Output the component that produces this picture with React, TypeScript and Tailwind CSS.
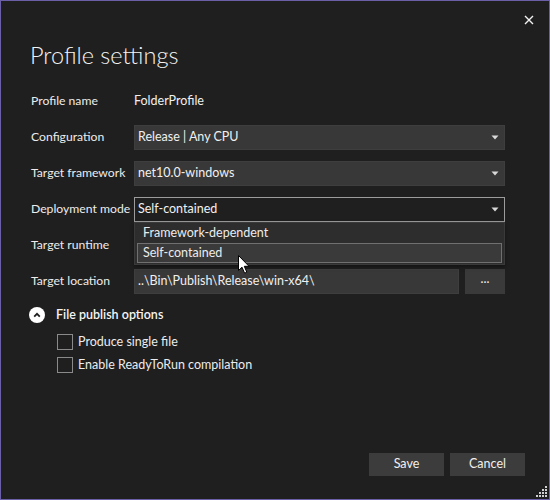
import { ReactNode } from "react";

const font = { fontFamily: "Lato, 'Noto Sans', sans-serif" };

function Caret() {
  return (
    <svg width="8" height="5" viewBox="0 0 8 5" className="shrink-0">
      <path d="M0.5 0.5 H7.5 L4 4.5 Z" fill="#d8d8d8" />
    </svg>
  );
}

function Combo({ value, focused }: { value: string; focused?: boolean }) {
  return (
    <div
      className={`flex h-[25px] w-full items-center justify-between pl-[3px] pr-[5px] text-[12.5px] text-[#f0f0f0] ${
        focused ? "border border-[#9c9c9c] bg-[#1f1f1f]" : "border border-[#3e3e3e] bg-[#383838]"
      }`}
    >
      <span>{value}</span>
      <Caret />
    </div>
  );
}

function Row({ label, children }: { label: string; children: ReactNode }) {
  return (
    <div className="flex h-[25px] items-center">
      <div className="w-[103px] shrink-0 text-[12.2px] text-[#ececec]">{label}</div>
      <div className="relative flex flex-1 items-center">{children}</div>
    </div>
  );
}

function Checkbox({ label }: { label: string }) {
  return (
    <div className="flex items-center gap-[5px]">
      <div className="h-[16px] w-[16px] border border-[#8a8a8a] bg-[#1f1f1f]" />
      <span className="text-[12.5px] leading-[16px] text-[#ececec]">{label}</span>
    </div>
  );
}

function Cursor() {
  return (
    <svg width="13" height="20" viewBox="0 0 13 20" className="pointer-events-none absolute left-[103px] top-[32px]">
      <path
        d="M0.5 0.5 L0.5 15.5 L4 12.2 L6.6 18.2 L8.8 17.2 L6.3 11.3 L11 11.3 Z"
        fill="#ffffff"
        stroke="#000000"
        strokeWidth="1"
        strokeLinejoin="round"
      />
    </svg>
  );
}

export default function App() {
  return (
    <div
      className="relative flex h-[500px] w-[550px] flex-col border border-[#6b60a8] bg-[#1f1f1f] text-[#f0f0f0]"
      style={font}
    >
      {/* Close */}
      <div className="flex h-[38px] justify-end pr-[15px] pt-[14px]">
        <svg width="10" height="10" viewBox="0 0 10 10">
          <path d="M1 1 L9 9 M9 1 L1 9" stroke="#f2f2f2" strokeWidth="1.4" />
        </svg>
      </div>

      <div className="flex flex-1 flex-col px-[30px]">
        <h1 className="-ml-[1px] text-[23.5px] font-light leading-[32px] text-[#f4f4f4]">Profile settings</h1>

        <div className="mt-[18px] flex w-[474px] flex-col gap-[11px]">
          <Row label="Profile name">
            <span className="text-[12.5px] text-[#f0f0f0]">FolderProfile</span>
          </Row>
          <Row label="Configuration">
            <Combo value="Release | Any CPU" />
          </Row>
          <Row label="Target framework">
            <Combo value="net10.0-windows" />
          </Row>
          <Row label="Deployment mode">
            <Combo value="Self-contained" focused />
            <div className="absolute left-0 right-0 top-full z-10 flex flex-col border border-[#3a3a3a] bg-[#2d2d2d] px-[2px] pb-[1px] shadow-[0_2px_4px_rgba(0,0,0,0.4)]">
              <div className="flex h-[20px] items-center pl-[6px] text-[12.5px] text-[#ececec]">
                Framework-dependent
              </div>
              <div className="flex h-[20px] items-center border border-[#707070] bg-[#3a3a3a] pl-[5px] text-[12.5px] text-[#ececec]">
                Self-contained
              </div>
              <Cursor />
            </div>
          </Row>
          <Row label="Target runtime">
            <Combo value="" />
          </Row>
          <Row label="Target location">
            <div className="flex w-full gap-[6px]">
              <div className="flex h-[25px] flex-1 items-center border border-[#3e3e3e] bg-[#383838] pl-[3px] text-[12.5px] text-[#f0f0f0]">
                ..\Bin\Publish\Release\win-x64\
              </div>
              <div className="flex h-[25px] w-[40px] items-center justify-center bg-[#3a3a3a] pb-[4px] text-[12.5px] text-[#f0f0f0]">
                ...
              </div>
            </div>
          </Row>
        </div>

        <div className="mt-[12px] flex items-center gap-[11px]">
          <div className="-ml-[2px] flex h-[16px] w-[16px] items-center justify-center rounded-full bg-white">
            <svg width="8" height="6" viewBox="0 0 8 6">
              <path d="M1.2 4.6 L4 1.8 L6.8 4.6" stroke="#1f1f1f" strokeWidth="1.8" fill="none" />
            </svg>
          </div>
          <span className="text-[12.5px] font-semibold text-[#f4f4f4]">File publish options</span>
        </div>

        <div className="mt-[9px] flex flex-col gap-[7px] pl-[26px]">
          <Checkbox label="Produce single file" />
          <Checkbox label="Enable ReadyToRun compilation" />
        </div>

        <div className="mt-auto flex justify-end gap-[6px] pb-[23px]">
          <button className="h-[23px] w-[75px] bg-[#3c3c3c] text-[12.5px] text-[#f0f0f0]">Save</button>
          <button className="-mr-[6px] h-[23px] w-[75px] bg-[#3c3c3c] text-[12.5px] text-[#f0f0f0]">Cancel</button>
        </div>
      </div>

      {/* Resize grip */}
      <svg width="12" height="12" viewBox="0 0 12 12" className="absolute bottom-[1px] right-[1px]">
        <g fill="#d0d0d0">
          <rect x="9" y="0" width="2" height="2" />
          <rect x="6" y="3" width="2" height="2" />
          <rect x="9" y="3" width="2" height="2" />
          <rect x="3" y="6" width="2" height="2" />
          <rect x="6" y="6" width="2" height="2" />
          <rect x="9" y="6" width="2" height="2" />
          <rect x="0" y="9" width="2" height="2" />
          <rect x="3" y="9" width="2" height="2" />
          <rect x="6" y="9" width="2" height="2" />
          <rect x="9" y="9" width="2" height="2" />
        </g>
      </svg>
    </div>
  );
}
